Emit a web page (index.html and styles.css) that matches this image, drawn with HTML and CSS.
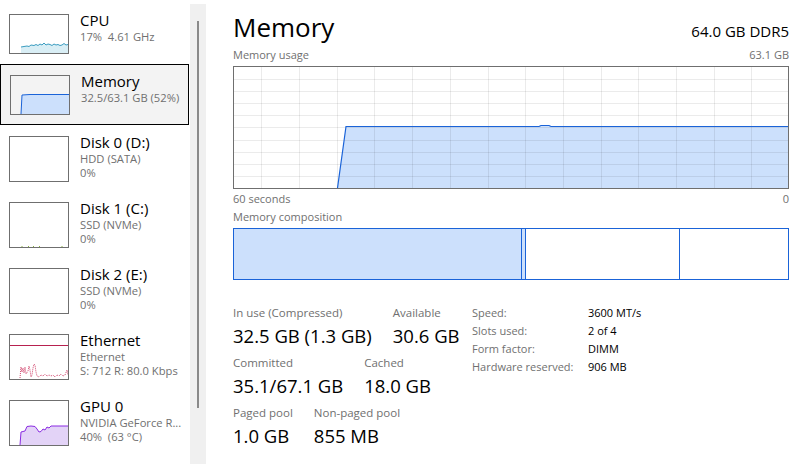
FILE: index.html
```html
<!DOCTYPE html>
<html lang="en">
<head>
<meta charset="utf-8">
<title>Task Manager - Performance</title>
<link rel="stylesheet" href="styles.css">
</head>
<body>
<div class="app">
  <nav class="sidebar">
    <div class="item">
      <svg class="thumb" width="60" height="40" viewBox="0 0 60 40">
        <path class="cpu-fill" d="M12 39 L12 33 L15 32.5 L18 32 L20 32.5 L22 31 L25 31.5 L27 30.5 L29 31.5 L31 30 L33 31 L35 29 L37 31 L39 30 L41 30.5 L43 31.5 L45 30 L47 31 L49 30.5 L51 31.5 L53 31 L55 29.5 L57 31 L59 30.5 L59 39 Z"/>
        <path class="cpu-line" d="M12 33 L15 32.5 L18 32 L20 32.5 L22 31 L25 31.5 L27 30.5 L29 31.5 L31 30 L33 31 L35 29 L37 31 L39 30 L41 30.5 L43 31.5 L45 30 L47 31 L49 30.5 L51 31.5 L53 31 L55 29.5 L57 31 L59 30.5"/>
        <rect class="frame" x="0.5" y="0.5" width="59" height="39"/>
      </svg>
      <div class="info">
        <div class="name">CPU</div>
        <div class="sub">17%&nbsp; 4.61 GHz</div>
      </div>
    </div>
    <div class="item selected">
      <svg class="thumb" width="60" height="40" viewBox="0 0 60 40">
        <path class="mem-fill" d="M11 39 L12 20 L20 19.5 L59 19.5 L59 39 Z"/>
        <path class="mem-line" d="M11 39 L12 20 L20 19.5 L59 19.5"/>
        <rect class="frame" x="0.5" y="0.5" width="59" height="39"/>
      </svg>
      <div class="info">
        <div class="name">Memory</div>
        <div class="sub">32.5/63.1 GB (52%)</div>
      </div>
    </div>
    <div class="item tall">
      <svg class="thumb" width="60" height="46" viewBox="0 0 60 46">
        <rect class="frame" x="0.5" y="0.5" width="59" height="45"/>
      </svg>
      <div class="info">
        <div class="name">Disk 0 (D:)</div>
        <div class="sub">HDD (SATA)</div>
        <div class="sub">0%</div>
      </div>
    </div>
    <div class="item tall">
      <svg class="thumb" width="60" height="46" viewBox="0 0 60 46">
        <path class="disk-tick" d="M13 44 V45 M19.5 44 V45 M24.5 44 V45 M30.5 44 V45 M53 44 V45"/>
        <rect class="frame" x="0.5" y="0.5" width="59" height="45"/>
      </svg>
      <div class="info">
        <div class="name">Disk 1 (C:)</div>
        <div class="sub">SSD (NVMe)</div>
        <div class="sub">0%</div>
      </div>
    </div>
    <div class="item tall">
      <svg class="thumb" width="60" height="46" viewBox="0 0 60 46">
        <rect class="frame" x="0.5" y="0.5" width="59" height="45"/>
      </svg>
      <div class="info">
        <div class="name">Disk 2 (E:)</div>
        <div class="sub">SSD (NVMe)</div>
        <div class="sub">0%</div>
      </div>
    </div>
    <div class="item tall">
      <svg class="thumb" width="60" height="46" viewBox="0 0 60 46">
        <path class="eth-send" d="M1 11.5 H59"/>
        <path class="eth-recv" d="M11 44 L12 33 L13 38 L14 34 L15 39 L16 33 L17 40 L19 37 L20 32 L21 36 L22 43 L23 41 L24 34 L25 30 L26 31 L27 38 L28 42 L30 43 L32 41 L34 42 L36 40 L38 42 L40 41 L42 42 L44 41 L46 43 L48 41 L50 42 L52 40 L54 42 L56 41 L58 36 L59 41"/>
        <rect class="frame" x="0.5" y="0.5" width="59" height="45"/>
      </svg>
      <div class="info">
        <div class="name">Ethernet</div>
        <div class="sub">Ethernet</div>
        <div class="sub">S: 712 R: 80.0 Kbps</div>
      </div>
    </div>
    <div class="item tall">
      <svg class="thumb" width="60" height="46" viewBox="0 0 60 46">
        <path class="gpu-fill" d="M11 45 L12 32 L14 31.5 L16 31 L18 26.5 L22 26 L26 26.5 L28 29 L30 32 L32 31.5 L34 29 L36 30 L38 27 L40 28 L42 26 L46 26 L59 26 L59 45 Z"/>
        <path class="gpu-line" d="M11 45 L12 32 L14 31.5 L16 31 L18 26.5 L22 26 L26 26.5 L28 29 L30 32 L32 31.5 L34 29 L36 30 L38 27 L40 28 L42 26 L46 26 L59 26"/>
        <rect class="frame" x="0.5" y="0.5" width="59" height="45"/>
      </svg>
      <div class="info">
        <div class="name">GPU 0</div>
        <div class="sub">NVIDIA GeForce R...</div>
        <div class="sub">40%&nbsp; (63 °C)</div>
      </div>
    </div>
  </nav>

  <div class="scroll">
    <div class="thumbbar"></div>
  </div>

  <main class="main">
    <header class="head">
      <h1 class="title">Memory</h1>
      <div class="spec">64.0 GB DDR5</div>
    </header>

    <div class="caption">
      <span>Memory usage</span>
      <span>63.1 GB</span>
    </div>
    <div class="chart">
      <svg width="554" height="121" viewBox="0 0 554 121">
        <path class="usage-fill" d="M0 121 L103.5 121 L112 59.5 L305 59.5 L307 58.5 L315 58.5 L317 59.5 L554 59.5 L554 121 Z"/>
        <g class="grid">
          <path d="M27.5 0 V121 M65.5 0 V121 M103.5 0 V121 M140.5 0 V121 M178.5 0 V121 M216.5 0 V121 M254.5 0 V121 M291.5 0 V121 M329.5 0 V121 M367.5 0 V121 M404.5 0 V121 M442.5 0 V121 M480.5 0 V121 M517.5 0 V121"/>
          <path d="M0 12.5 H554 M0 24.5 H554 M0 36.5 H554 M0 48.5 H554 M0 60.5 H554 M0 73.5 H554 M0 85.5 H554 M0 97.5 H554 M0 109.5 H554"/>
        </g>
        <path class="usage-line" d="M103.5 121 L112 59.5 L305 59.5 L307 58.5 L315 58.5 L317 59.5 L554 59.5"/>
      </svg>
    </div>
    <div class="caption lower">
      <span>60 seconds</span>
      <span>0</span>
    </div>

    <div class="caption comp-label">
      <span>Memory composition</span>
    </div>
    <div class="composition">
      <div class="seg in-use"></div>
      <div class="seg modified"></div>
      <div class="seg standby"></div>
      <div class="seg free"></div>
    </div>

    <section class="details">
      <div class="stats">
        <div class="stat-row">
          <div class="stat">
            <div class="label">In use (Compressed)</div>
            <div class="value">32.5 GB (1.3 GB)</div>
          </div>
          <div class="stat">
            <div class="label">Available</div>
            <div class="value">30.6 GB</div>
          </div>
        </div>
        <div class="stat-row">
          <div class="stat">
            <div class="label">Committed</div>
            <div class="value">35.1/67.1 GB</div>
          </div>
          <div class="stat">
            <div class="label">Cached</div>
            <div class="value">18.0 GB</div>
          </div>
        </div>
        <div class="stat-row">
          <div class="stat">
            <div class="label">Paged pool</div>
            <div class="value">1.0 GB</div>
          </div>
          <div class="stat">
            <div class="label">Non-paged pool</div>
            <div class="value">855 MB</div>
          </div>
        </div>
      </div>
      <dl class="props">
        <dt>Speed:</dt><dd>3600 MT/s</dd>
        <dt>Slots used:</dt><dd>2 of 4</dd>
        <dt>Form factor:</dt><dd>DIMM</dd>
        <dt>Hardware reserved:</dt><dd>906 MB</dd>
      </dl>
    </section>
  </main>
</div>
</body>
</html>
```

FILE: styles.css
```css
* { box-sizing: border-box; }

html, body {
  margin: 0;
  padding: 0;
  background: #ffffff;
}

body {
  width: 811px;
  height: 464px;
  overflow: hidden;
  font-family: "Open Sans", "Noto Sans", "Liberation Sans", sans-serif;
  color: #000;
}

.app {
  display: flex;
  height: 464px;
}

/* ---------- left list of devices ---------- */
.sidebar {
  width: 190px;
  flex: none;
  padding-top: 3px;
}

.item {
  display: flex;
  align-items: flex-start;
  width: 189px;
  height: 61px;
  padding: 11px 0 0 9px;
}

.item.tall { height: 66px; }

.item.selected {
  background: #f3f3f3;
  border: 1px solid #000;
  padding-top: 10px;
  padding-left: 9px;
}

.thumb {
  flex: none;
  display: block;
}

.frame {
  fill: none;
  stroke: #6f6f6f;
  stroke-width: 1;
}

.cpu-fill { fill: #d9eef5; }
.cpu-line { fill: none; stroke: #3a9cc0; stroke-width: 1; }
.mem-fill { fill: #cce0fc; }
.mem-line { fill: none; stroke: #1a63d8; stroke-width: 1; }
.disk-tick { stroke: #8ab440; stroke-width: 1; }
.eth-send { fill: none; stroke: #b7214f; stroke-width: 1; }
.eth-recv { fill: none; stroke: #d2466e; stroke-width: 1; stroke-dasharray: 1 1; }
.gpu-fill { fill: #e3d3f7; }
.gpu-line { fill: none; stroke: #8a2be2; stroke-width: 1; }

.info {
  margin-left: 11px;
  margin-top: -2px;
  min-width: 0;
  white-space: nowrap;
}

.name {
  font-size: 15px;
  line-height: 16px;
  color: #000;
}

.sub {
  font-size: 11.2px;
  line-height: 14px;
  color: #707070;
}

.name + .sub { margin-top: 2px; }

/* ---------- scroll bar ---------- */
.scroll {
  width: 16px;
  flex: none;
  margin-top: 4px;
  background: #f0f0f0;
  padding-top: 17px;
}

.thumbbar {
  width: 2px;
  height: 387px;
  margin-left: 7px;
  background: #8a8a8a;
}

/* ---------- detail pane ---------- */
.main {
  flex: 1;
  padding: 11px 22px 0 27px;
}

.head {
  display: flex;
  justify-content: space-between;
  align-items: baseline;
  height: 32px;
}

.title {
  margin: 0;
  font-size: 26px;
  font-weight: 400;
  line-height: 32px;
}

.spec {
  font-size: 15px;
}

.caption {
  display: flex;
  justify-content: space-between;
  font-size: 11px;
  line-height: 16px;
  color: #707070;
  margin-top: 4px;
}

.chart {
  margin-top: 3px;
  width: 556px;
  height: 123px;
  border: 1px solid #6f6f6f;
}

.chart svg { display: block; }

.grid path {
  fill: none;
  stroke: rgba(0, 0, 0, 0.08);
  stroke-width: 1;
}

.usage-fill { fill: #cce0fc; }
.usage-line { fill: none; stroke: #1a63d8; stroke-width: 1.2; }

.caption.lower { margin-top: 2px; }
.caption.comp-label { margin-top: 2px; }

.composition {
  display: flex;
  margin-top: 3px;
  width: 556px;
  height: 52px;
  border: 1px solid #1a63d8;
}

.seg { height: 100%; }
.seg.in-use { width: 288px; background: #cce0fc; border-right: 1px solid #1a63d8; }
.seg.modified { width: 4px; background: #cce0fc; border-right: 1px solid #1a63d8; }
.seg.standby { width: 154px; border-right: 1px solid #1a63d8; }
.seg.free { flex: 1; }

/* ---------- numbers below the graphs ---------- */
.details {
  display: flex;
  margin-top: 25px;
}

.stats {
  width: 239px;
  flex: none;
}

.stat-row {
  display: flex;
  gap: 21px;
  margin-bottom: 6px;
}

.label {
  font-size: 11.5px;
  line-height: 16px;
  color: #707070;
  white-space: nowrap;
}

.value {
  font-size: 18.5px;
  line-height: 26px;
  margin-top: 2px;
  white-space: nowrap;
}

.props {
  display: grid;
  grid-template-columns: 116px auto;
  grid-auto-rows: 18px;
  margin: -1px 0 0;
  font-size: 11px;
  line-height: 18px;
  align-content: start;
}

.props dt { color: #707070; }
.props dd { margin: 0; color: #000; }
```
